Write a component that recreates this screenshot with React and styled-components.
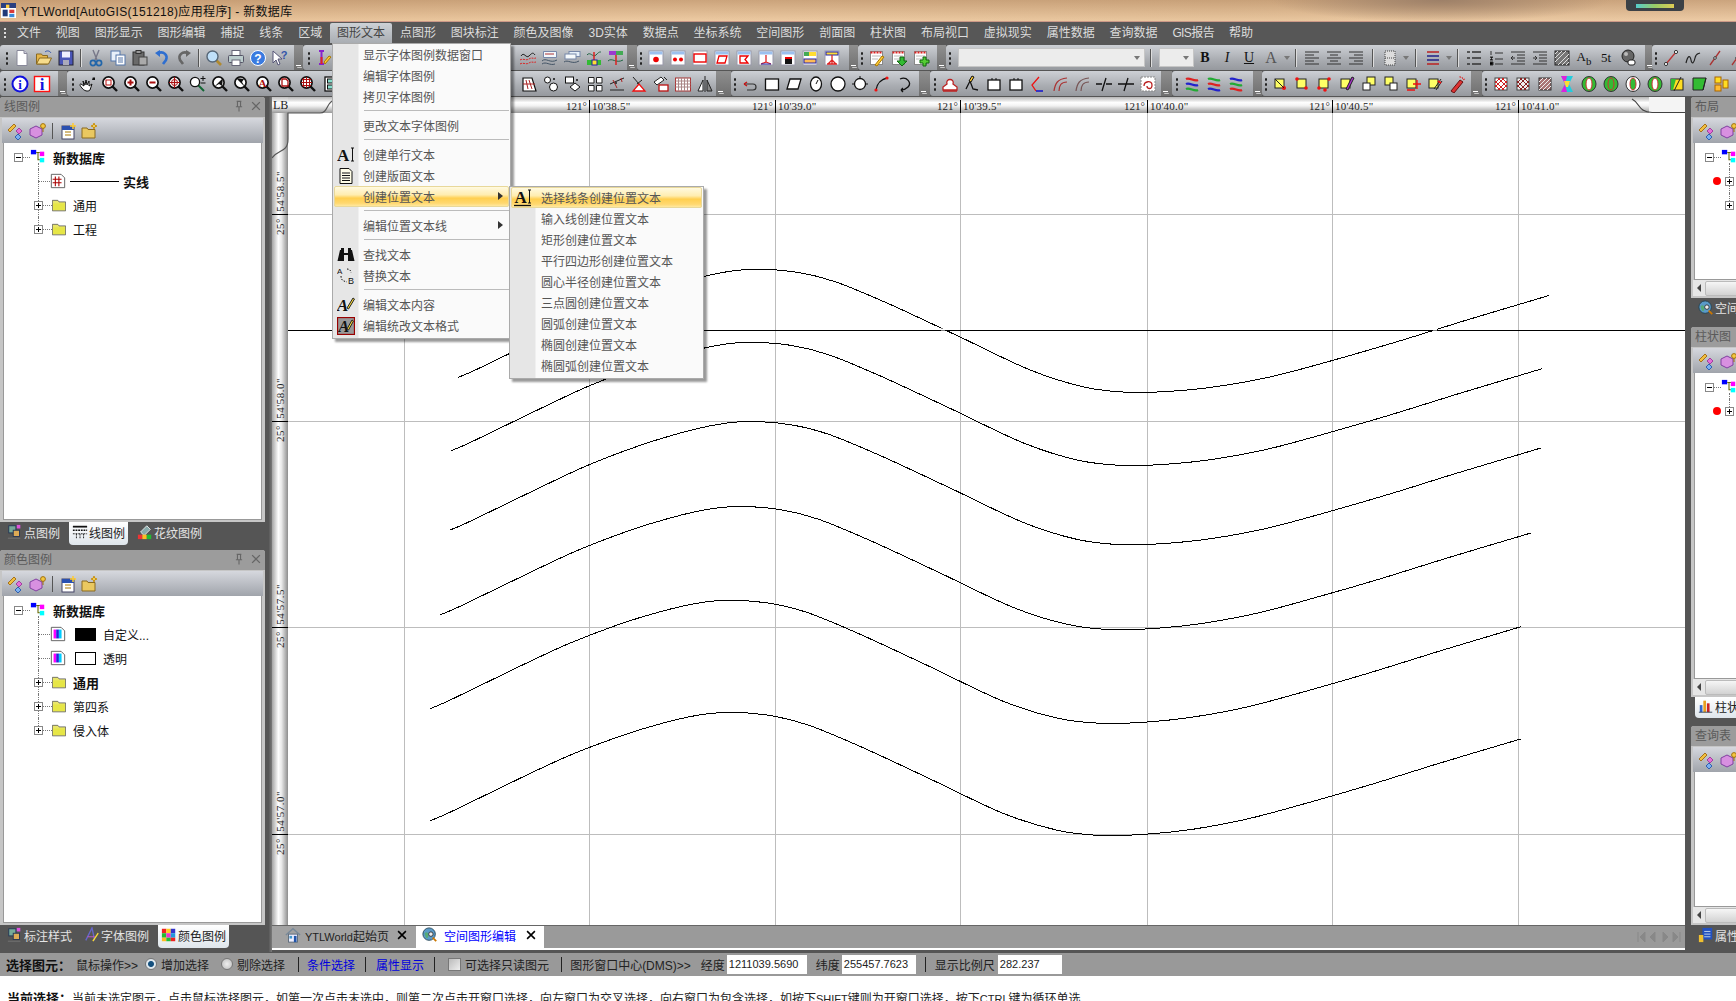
import React from 'react';
import styled, { createGlobalStyle } from 'styled-components';

const GlobalStyle = createGlobalStyle`
  html, body {
    margin: 0;
    padding: 0;
    background: #fff;
    overflow: hidden;
  }
  body {
    font-family: "Liberation Sans", "Noto Sans CJK SC", sans-serif;
    font-size: 12px;
    color: #222;
  }
`;

const Shell = styled.div`
  position: relative;
  width: 1736px;
  height: 1001px;
  overflow: hidden;
  display: flex;
  flex-direction: column;
  background: #555;
`;

/* ---------- title + menu ---------- */

const TitleBar = styled.div`
  height: 21px;
  flex: none;
  position: relative;
  display: flex;
  align-items: center;
  padding-left: 1px;
  gap: 5px;
  color: #111;
  background:
    radial-gradient(ellipse 170px 22px at 1440px 0, #9d8068 0, rgba(157, 128, 104, 0) 100%),
    linear-gradient(180deg, rgba(170, 125, 85, 0.5), rgba(240, 205, 165, 0.3)),
    linear-gradient(90deg, #e2bb90, #eccaa2 40%, #e6c49c 70%, #eccba6);
`;

const TitleText = styled.span`
  white-space: nowrap;
  font-size: 12px;
  letter-spacing: 0.35px;
`;

const Gadget = styled.div`
  position: absolute;
  left: 1626px;
  top: -3px;
  width: 58px;
  height: 14px;
  border-radius: 0 0 4px 4px;
  background: #3c4146;
  display: flex;
  align-items: center;
  justify-content: center;
  &::after {
    content: "";
    width: 38px;
    height: 4px;
    margin-top: 3px;
    background: linear-gradient(90deg, #5cc, #9c6, #dc5);
  }
`;

const MenuBar = styled.div`
  height: 24px;
  flex: none;
  display: flex;
  align-items: flex-start;
  padding-left: 3px;
  background: #575757;
  border-top: 1px solid #c98;
  box-sizing: border-box;
`;

const MenuGrip = styled.span`
  width: 7px;
  height: 12px;
  margin-top: 5px;
  background: radial-gradient(circle, #ddd 1px, transparent 1.4px) 0 0 / 4px 4px repeat-y;
`;

const MenuItem = styled.span`
  height: 20px;
  line-height: 21px;
  padding: 0 7px;
  margin-right: 0.85px;
  margin-top: 1px;
  white-space: nowrap;
  letter-spacing: ${(p) => (p.$tight ? '-0.6px' : '0')};
  color: ${(p) => (p.$active ? '#444' : '#ddd')};
  background: ${(p) => (p.$active ? 'linear-gradient(180deg, #cdd1d6, #a9adb2)' : 'none')};
  border-radius: 2px 2px 0 0;
`;

/* ---------- toolbars ---------- */

const ToolRow = styled.div`
  height: 25px;
  flex: none;
  display: flex;
  margin-bottom: 1px;
`;

const ToolGroup = styled.div`
  width: ${(p) => p.$w}px;
  flex: none;
  display: flex;
  align-items: center;
  padding-left: ${(p) => p.$pad || 0}px;
  box-sizing: border-box;
  border-radius: 3px 0 0 3px;
  overflow: hidden;
  background: linear-gradient(180deg, #cdd0d5, #a9acb1 60%, #96999e);
`;

const Grip = styled.span`
  width: 8px;
  height: 14px;
  flex: none;
  background: radial-gradient(circle, #222 1px, transparent 1.4px) 0 0 / 8px 5px repeat-y;
`;

const ToolSlot = styled.span`
  width: 22px;
  height: 22px;
  flex: none;
  display: flex;
  align-items: center;
  justify-content: center;
`;

const ToolFill = styled.span`
  flex: 1;
`;

const ToolSep = styled.span`
  width: 1px;
  height: 18px;
  flex: none;
  background: #555;
  border-right: 1px solid #ddd;
  margin: 0 ${(p) => p.$m || 3}px;
`;

const Tail = styled.span`
  width: ${(p) => p.$w || 9}px;
  height: 100%;
  flex: none;
  margin-left: auto;
  position: relative;
  background: linear-gradient(180deg, #8f8f8f, #6f6f6f);
  &::after {
    content: "";
    position: absolute;
    left: 2px;
    bottom: 4px;
    width: 5px;
    height: 1px;
    background: #fff;
    box-shadow: 1px 2px 0 -0.2px #fff;
  }
`;

const Combo = styled.span`
  width: ${(p) => p.$w}px;
  height: 19px;
  flex: none;
  box-sizing: border-box;
  background: #ececec;
  border: 1px solid #c6c6c6;
  display: flex;
  align-items: center;
  justify-content: flex-end;
  padding-right: 4px;
  margin-left: ${(p) => p.$ml || 0}px;
  &::after {
    content: "";
    border: 3px solid transparent;
    border-top: 4px solid #777;
    border-bottom: 0;
  }
`;

const Drop = styled.span`
  width: 9px;
  flex: none;
  display: flex;
  justify-content: center;
  &::after {
    content: "";
    border: 3px solid transparent;
    border-top: 4px solid #777;
    border-bottom: 0;
  }
`;

const TextTool = styled.span`
  font-family: "Liberation Serif", serif;
  font-weight: ${(p) => (p.$plain ? 400 : 700)};
  font-style: ${(p) => (p.$italic ? 'italic' : 'normal')};
  text-decoration: ${(p) => (p.$under ? 'underline' : 'none')};
  font-size: ${(p) => p.$size || 14}px;
  color: ${(p) => p.$color || '#111'};
`;

/* ---------- icons ---------- */

const Glyph = styled.svg`
  width: ${(p) => p.$s || 18}px;
  height: ${(p) => p.$s || 18}px;
  flex: none;
  display: block;
`;

const Card = ({ children }) => (
  <>
    <rect x="2" y="2" width="14" height="14" fill="#fff" stroke="#99a" />
    <rect x="2.5" y="2.5" width="13" height="3" fill="#9cc0ee" />
    {children}
  </>
);

const Note = ({ children }) => (
  <>
    <rect x="2.5" y="2.5" width="12" height="13" fill="#fff" stroke="#888" />
    <path d="M2.5 3.5h12" stroke="#d22" strokeWidth="2" strokeDasharray="2 1" />
    <path d="M4 7h9M4 10h6" stroke="#bbb" />
    {children}
  </>
);

const Lens = ({ children }) => (
  <>
    <path d="M11 11l5 5" stroke="#111" strokeWidth="2.4" />
    <circle cx="7.5" cy="7.5" r="5.6" fill="#fff" stroke="#111" strokeWidth="1.7" />
    {children}
  </>
);

const Yel = ({ children }) => (
  <>
    <rect x="3" y="4" width="9" height="9" fill="#ff6" stroke="#222" />
    {children}
  </>
);

const Hatch = ({ c = '#c22', bg = '#fff' }) => (
  <>
    <rect x="3" y="3" width="12" height="12" fill={bg} stroke="#444" />
    <path d="M3 6l9 9M3 10l5 5M6 3l9 9M10 3l5 5M15 6l-9 9M15 10l-5 5M12 3l-9 9M8 3l-5 5" stroke={c} />
  </>
);

const Ring = ({ fill = '#3b3', inner = '#fff', c = '#c33' }) => (
  <>
    <ellipse cx="9" cy="9" rx="7" ry="7.5" fill={fill} stroke="#333" />
    <ellipse cx="9" cy="9" rx="3" ry="6" fill={inner} stroke={c} />
  </>
);

const Line3 = ({ a, b, c }) => (
  <>
    <path d="M3 4c4-2 8 3 12 1" stroke={a} strokeWidth="2.4" fill="none" />
    <path d="M3 9c4-2 8 3 12 1" stroke={b} strokeWidth="2.4" fill="none" />
    <path d="M3 14c4-2 8 3 12 1" stroke={c} strokeWidth="2.4" fill="none" />
  </>
);

const ICONS = {
  file: <><path d="M4 1.5h7l3 3v12H4z" fill="#fff" stroke="#889" /><path d="M11 1.5v3h3" fill="#ccd" stroke="#889" /></>,
  open: <><path d="M1.5 15V5h5l1 1.5h5V15z" fill="#e6b64a" stroke="#8a6a20" /><path d="M1.5 15l3-6h12l-3 6z" fill="#f6dc8c" stroke="#8a6a20" /><path d="M10 3c2-2 5-1 6 1" stroke="#35a" fill="none" /></>,
  save: <><rect x="2" y="2" width="14" height="14" fill="#4a56b8" stroke="#223" /><rect x="5" y="2.5" width="8" height="6" fill="#eef" /><rect x="6" y="11" width="6" height="5" fill="#aab" /></>,
  cut: <><path d="M6 1l4 10M12 1l-4 10" stroke="#778" strokeWidth="1.4" /><circle cx="6" cy="14" r="2.6" fill="none" stroke="#26a" strokeWidth="1.7" /><circle cx="12" cy="14" r="2.6" fill="none" stroke="#26a" strokeWidth="1.7" /></>,
  copy: <><rect x="2" y="2" width="9" height="10" fill="#e8f0fa" stroke="#57a" /><rect x="7" y="6" width="9" height="10" fill="#fff" stroke="#57a" /><path d="M9 9h5M9 11h5M9 13h5" stroke="#57a" /></>,
  paste: <><rect x="2" y="3" width="11" height="13" fill="#6a6a6a" stroke="#333" /><rect x="5" y="1.5" width="5" height="3" fill="#999" stroke="#333" /><rect x="8" y="8" width="8" height="8" fill="#aaa" stroke="#444" /></>,
  undo: <><path d="M5 4c6-2 10 2 8 7l-3 4" stroke="#2f6fd0" strokeWidth="2.6" fill="none" /><path d="M2 4l5-3v7z" fill="#2f6fd0" /></>,
  redo: <><path d="M13 4c-6-2-10 2-8 7l3 4" stroke="#666" strokeWidth="2.6" fill="none" /><path d="M16 4l-5-3v7z" fill="#666" /></>,
  search: <><path d="M11 11l5 5" stroke="#b08a30" strokeWidth="2.6" /><circle cx="7.5" cy="7.5" r="5.5" fill="#bfe0fa" stroke="#567" strokeWidth="1.4" /></>,
  print: <><rect x="5" y="1.5" width="8" height="5" fill="#fff" stroke="#667" /><rect x="1.5" y="6.5" width="15" height="7" rx="1" fill="#bcc" stroke="#556" /><rect x="5" y="11" width="8" height="5.5" fill="#fff" stroke="#667" /></>,
  help: <><circle cx="9" cy="9" r="7.5" fill="#3a7be0" stroke="#fff" /><text x="9" y="13.5" fontSize="12" fontWeight="700" textAnchor="middle" fill="#fff" fontFamily="Liberation Sans">?</text></>,
  what: <><path d="M2 2v12l3-3 2 5 2-1-2-5h4z" fill="#fff" stroke="#557" /><text x="13" y="10" fontSize="11" fontWeight="700" textAnchor="middle" fill="#35a" fontFamily="Liberation Sans">?</text></>,
  pencilI: <><path d="M4 2h5M6.5 2v13M4 15h5" stroke="#82c" strokeWidth="2" /><path d="M6.5 8v7" stroke="#d22" strokeWidth="2" /><path d="M10 15l6-7-2-1-5 6z" fill="#fc3" stroke="#a70" /></>,
  waveRed: <><path d="M2 7c3-5 5 3 8 0s4-4 6-1" stroke="#222" fill="none" /><path d="M1 11c3-2 6 1 9-1s4 0 7-1M1 15c3-2 6 1 9-1s4 0 7-1" stroke="#d22" strokeDasharray="2 1" fill="none" /></>,
  waveBox: <><path d="M2.5 2.5h13v6h-13z" fill="#f4f8fc" stroke="#78a" /><path d="M4 5h9" stroke="#a33" /><path d="M1 12c4-4 8 3 15-1M1 15c4-3 8 2 13 0" stroke="#456" fill="none" /></>,
  waveBox2: <><rect x="6" y="2.5" width="11" height="5" fill="#e6f0fa" stroke="#78a" /><rect x="2" y="5" width="11" height="5" fill="#f6fafc" stroke="#78a" /><path d="M1 13c4-3 8 3 15-1" stroke="#456" fill="none" /></>,
  waveLink: <><path d="M2 6c3-4 6 3 9 0s3-3 5-3" stroke="#264" fill="none" /><path d="M9 3v9" stroke="#d22" strokeWidth="1.5" /><rect x="2" y="11" width="14" height="5" fill="#3b3" /><rect x="7" y="11" width="5" height="5" fill="#fd3" stroke="#22a" /></>,
  waveBar: <><rect x="2" y="2" width="14" height="4" fill="#9c3ad0" /><rect x="9" y="2" width="7" height="4" fill="#4a5" /><path d="M1 12c4-4 8 3 15-1" stroke="#264" fill="none" /><path d="M9 6v10" stroke="#d22" strokeWidth="1.5" /></>,
  cardDot: <Card><circle cx="9" cy="10.5" r="2.8" fill="#e00" /></Card>,
  cardDots: <Card><circle cx="6" cy="10.5" r="2" fill="#e00" /><circle cx="12" cy="10.5" r="2" fill="#e00" /></Card>,
  cardRect: <><rect x="2" y="2" width="14" height="14" fill="#fff" stroke="#99a" /><rect x="3" y="5" width="12" height="8" fill="#fff" stroke="#e00" strokeWidth="1.4" /></>,
  cardPara: <Card><path d="M6 7h8l-2 7H4z" fill="none" stroke="#e00" strokeWidth="1.3" /></Card>,
  cardChev: <Card><path d="M5 7h8l-3 3.5 3 3.5H5z" fill="none" stroke="#e00" strokeWidth="1.3" /></Card>,
  cardAxis: <Card><path d="M9 6v7l-5 2M9 13l5 2" stroke="#d22" strokeWidth="1.3" fill="none" /><path d="M4 15h10" stroke="#22a" /></Card>,
  cardBlock: <Card><rect x="6" y="10" width="7" height="5" fill="#111" /><rect x="6" y="8" width="7" height="2" fill="#e00" /></Card>,
  cardSplit: <><rect x="2" y="2" width="14" height="14" fill="#fff" stroke="#99a" /><rect x="3" y="3" width="12" height="4" fill="#4a5" /><rect x="8" y="3" width="7" height="4" fill="#fd3" /><rect x="3" y="10" width="12" height="4" fill="#fb5" stroke="#22a" /></>,
  cardCross: <><rect x="2" y="2" width="14" height="14" fill="#fff" stroke="#99a" /><rect x="3" y="3" width="12" height="3" fill="#fd3" stroke="#22a" /><path d="M9 6v9M4 15h10M5 15l4-4 4 4" stroke="#d22" strokeWidth="1.3" fill="none" /></>,
  noteEdit: <Note><path d="M7 16l7-9 2 1-7 9z" fill="#fc3" stroke="#a70" /></Note>,
  noteDown: <Note><path d="M10 8h4v4h3l-5 5-5-5h3z" fill="#3b3" stroke="#161" /></Note>,
  notePlus: <Note><path d="M11 8h3v3h3v3h-3v3h-3v-3H8v-3h3z" fill="#5c3" stroke="#161" /></Note>,
  alignL: <path d="M2 3h14M2 6h9M2 9h14M2 12h9M2 15h14" stroke="#333" />,
  alignC: <path d="M2 3h14M5 6h8M2 9h14M5 12h8M2 15h14" stroke="#333" />,
  alignR: <path d="M2 3h14M7 6h9M2 9h14M7 12h9M2 15h14" stroke="#333" />,
  table: <><rect x="4" y="2" width="10" height="14" fill="#ddd" stroke="#444" strokeDasharray="1 1" /><path d="M4 9h10" stroke="#444" strokeDasharray="1 1" /></>,
  listRed: <><path d="M3 3h12M3 15h12" stroke="#b22" strokeWidth="1.4" /><path d="M3 7h12M3 11h12" stroke="#228" strokeWidth="1.4" /></>,
  bullet: <path d="M2 3h3M7 3h9M2 9h3M7 9h9M2 15h3M7 15h9" stroke="#333" strokeWidth="1.5" />,
  number: <path d="M4 2v4M3 8h3l-3 3h3M3 13h3v3H3M8 4h8M8 10h8M8 15h8" stroke="#333" />,
  indentL: <path d="M2 3h14M8 6h8M8 9h8M8 12h8M2 15h14M6 9H2m2-2L2 9l2 2" stroke="#333" fill="none" />,
  indentR: <path d="M2 3h14M8 6h8M8 9h8M8 12h8M2 15h14M2 9h4m-2-2l2 2-2 2" stroke="#333" fill="none" />,
  texture: <><rect x="2" y="2" width="14" height="14" fill="#777" stroke="#222" /><path d="M2 5l3-3M2 9l7-7M2 13l11-11M5 16L16 5M9 16l7-7M13 16l3-3" stroke="#ddd" /></>,
  ball: <><circle cx="9" cy="7" r="6" fill="#666" stroke="#222" /><circle cx="7" cy="5" r="2" fill="#bbb" /><rect x="9" y="11" width="7" height="5" rx="2" fill="#fff" stroke="#222" /></>,
  nodeLine: <><path d="M4 15L14 3" stroke="#b33" strokeWidth="1.3" /><circle cx="14" cy="3" r="1.6" fill="#fff" stroke="#333" /><circle cx="4" cy="15" r="1.6" fill="#fff" stroke="#333" /></>,
  wavy: <path d="M2 14c2-8 4-8 5-3s3 3 4-2 3-4 5-5" stroke="#222" fill="none" strokeWidth="1.2" />,
  slash: <><path d="M4 16L14 2" stroke="#a33" strokeWidth="1.3" /><circle cx="9" cy="9" r="1.3" fill="#fff" stroke="#333" /></>,
  info: <><circle cx="9" cy="9" r="7.5" fill="#fff" stroke="#11d" strokeWidth="2" /><text x="9" y="14" fontSize="13" fontWeight="700" textAnchor="middle" fill="#11d" fontFamily="Liberation Serif">i</text></>,
  infoBox: <><rect x="1.5" y="1.5" width="15" height="15" fill="#fff" stroke="#f11" strokeWidth="1.4" /><text x="9" y="14.5" fontSize="17" fontWeight="700" textAnchor="middle" fill="#11d" fontFamily="Liberation Serif">i</text></>,
  hand: <><path d="M3 13c-2-2-3-4-1-4l3 2-1-5 2 4 1-5 1 5 2-4v5l3-2-2 6c-2 2-6 1-8-2z" fill="#fff" stroke="#111" /><path d="M14 2l1 1 1-1v3h-3z" fill="#111" /></>,
  zRect: <Lens><rect x="5" y="5" width="5" height="5" fill="none" stroke="#b11" /></Lens>,
  zPlus: <Lens><path d="M7.5 4.5v6M4.5 7.5h6" stroke="#a11" strokeWidth="2" /></Lens>,
  zMinus: <Lens><path d="M4.5 7.5h6" stroke="#a11" strokeWidth="2" /></Lens>,
  zCross: <Lens><path d="M7.5 2v11M2 7.5h11" stroke="#a11" strokeWidth="1.2" /><circle cx="7.5" cy="7.5" r="3" fill="none" stroke="#a11" /></Lens>,
  zPm: <><path d="M9 10l6 6" stroke="#163" strokeWidth="2" /><circle cx="6" cy="7" r="4.6" fill="#fff" stroke="#111" strokeWidth="1.3" /><path d="M14 1v5M11.5 3.5h5M11.5 8h5" stroke="#111" /></>,
  zArrow: <Lens><path d="M3 12l9-9-1 8-3-2z" fill="#111" /></Lens>,
  zBack: <Lens><path d="M12 12L3 3l8 1-2 3z" fill="#111" /></Lens>,
  zA: <Lens><text x="7.5" y="11.5" fontSize="11" fontWeight="700" textAnchor="middle" fill="#a11" fontFamily="Liberation Serif">A</text></Lens>,
  zDoc: <Lens><path d="M5 4h4l2 2v5H5z" fill="#fff" stroke="#a11" strokeWidth="1.3" /></Lens>,
  zGrid: <Lens><path d="M4.5 3v9M7.5 2v11M10.5 3v9M3 4.5h9M2 7.5h11M3 10.5h9" stroke="#a11" /></Lens>,
  tiles: <><rect x="4" y="2" width="10" height="14" fill="#fff" stroke="#111" strokeWidth="1.3" /><rect x="6.5" y="4" width="5" height="4" fill="#8dc" stroke="#111" /><rect x="6.5" y="10" width="5" height="4" fill="#8dc" stroke="#111" /></>,
  trap: <><path d="M3 3h9l4 13H3z" fill="#fff" stroke="#111" strokeWidth="1.2" /><path d="M6 5l2 9M9 5l3 9M3 9h12" stroke="#a22" /></>,
  circles: <><circle cx="5.5" cy="5" r="3" fill="#fff" stroke="#111" /><circle cx="11.5" cy="12" r="4" fill="#fff" stroke="#111" /><circle cx="12" cy="4" r="1" fill="#111" /></>,
  boxDiamond: <><rect x="1.5" y="2" width="8" height="6" fill="#fff" stroke="#111" /><path d="M11 8l5 4-5 4-5-4z" fill="#fff" stroke="#111" /><circle cx="13" cy="5" r="1" fill="#111" /></>,
  four: <path d="M2.5 2.5h5.5v5.5H2.5zM10.5 2.5H16v5.5h-5.5zM2.5 10.5h5.5V16H2.5zM10.5 10.5H16V16h-5.5z" fill="#fff" stroke="#222" />,
  triLines: <><path d="M2 9l14-6M2 15h14" stroke="#222" /><path d="M5 5l4 8M13 3l1 4" stroke="#a22" /><circle cx="8" cy="8" r="1" fill="#222" /></>,
  redTri: <><path d="M3 2l6 7M12 5L7 9" stroke="#222" /><path d="M9 9l6 7H3z" fill="#fff" stroke="#e11" strokeWidth="1.3" /></>,
  tilt: <><path d="M2 7l7-5 3 3-7 5z" fill="#fff" stroke="#222" /><rect x="7" y="10" width="9" height="6" fill="#fff" stroke="#b11" strokeWidth="1.3" /><path d="M12 2l3 3" stroke="#222" /></>,
  gridRed: <><rect x="1.5" y="3" width="15" height="13" fill="#fff" stroke="#a33" /><path d="M4.5 3v13M7.5 3v13M10.5 3v13M13.5 3v13M1.5 6h15M1.5 9h15M1.5 12h15" stroke="#a88" /></>,
  mirror: <><path d="M9 1v16" stroke="#222" /><path d="M7 5v11H2z" fill="#fff" stroke="#222" /><path d="M11 5v11h5z" fill="#888" stroke="#222" /></>,
  loop: <><path d="M3 9h9c4 0 4 6 0 6H6" fill="none" stroke="#333" strokeWidth="1.2" /><path d="M3 9l3-2M3 9l3 2" stroke="#c11" strokeWidth="1.4" /></>,
  rectB: <rect x="2.5" y="4" width="13" height="11" fill="#fff" stroke="#111" strokeWidth="1.3" />,
  paraB: <path d="M5 4h11l-3 10H2z" fill="#fff" stroke="#111" strokeWidth="1.3" />,
  circDot: <><ellipse cx="9" cy="9" rx="5.5" ry="7" fill="#fff" stroke="#111" strokeWidth="1.3" /><path d="M9 9l2-4" stroke="#111" /></>,
  circB: <circle cx="9" cy="9" r="7" fill="#fff" stroke="#111" strokeWidth="1.3" />,
  circRing: <><circle cx="9" cy="9" r="5.5" fill="#fff" stroke="#111" strokeWidth="1.3" /><path d="M1 9h3M14 9h3M9 1v3" stroke="#111" /></>,
  arcRed: <><path d="M3 15C4 8 9 4 14 3" fill="none" stroke="#111" strokeWidth="1.3" /><circle cx="3" cy="15" r="1.6" fill="#e11" /><circle cx="14" cy="3" r="1.6" fill="#e11" /></>,
  arcBlack: <path d="M5 4c7-3 12 4 8 8-2 2-4 3-7 3m0 0l2-2m-2 2l2 2" fill="none" stroke="#111" strokeWidth="1.3" />,
  stamp: <><path d="M6 9c-2-6 8-6 6 0l4 3v3H2v-3z" fill="#fff" stroke="#b22" strokeWidth="1.3" /><path d="M2 16h14" stroke="#b22" strokeWidth="1.6" /></>,
  penLine: <><path d="M3 14l4-8 3 8 5 1" fill="none" stroke="#111" strokeWidth="1.3" /><path d="M6 6l3-5 2 1-3 5z" fill="#fc3" stroke="#111" /></>,
  tabRect: <><rect x="3" y="5" width="12" height="10" fill="#fff" stroke="#111" strokeWidth="1.3" /><path d="M7 5V3M11 5V3" stroke="#111" /></>,
  polyRB: <><path d="M10 2L3 10l4 6" fill="none" stroke="#e11" strokeWidth="1.3" /><path d="M7 16h7" stroke="#11c" strokeWidth="1.3" /></>,
  cornerR: <path d="M3 16C4 9 6 4 16 3M8 16c0-5 2-9 8-9" fill="none" stroke="#a33" strokeWidth="1.2" />,
  cornerG: <path d="M3 16C4 9 6 4 16 3M8 16c0-5 2-9 8-9" fill="none" stroke="#755" strokeWidth="1.2" />,
  breakH: <path d="M1 9h6M11 9h6M11 3L7 16" stroke="#111" strokeWidth="1.3" />,
  crossH: <path d="M1 9h16M11 3L7 16" stroke="#111" strokeWidth="1.3" />,
  swirl: <><rect x="2" y="2" width="14" height="14" fill="#fff" stroke="#888" strokeDasharray="2 1" /><path d="M5 11c0-5 8-6 8-1s-5 4-5 1" fill="none" stroke="#b22" strokeWidth="1.3" /></>,
  stackA: <Line3 a="#d22" b="#22c" c="#2a3" />,
  stackB: <Line3 a="#2a3" b="#d22" c="#22c" />,
  stackC: <Line3 a="#22c" b="#2a3" c="#d22" />,
  y1: <Yel><circle cx="12" cy="13" r="2" fill="#e11" /><path d="M3 4l9 9" stroke="#222" /></Yel>,
  y2: <Yel><circle cx="3" cy="4" r="1.8" fill="#e11" /><circle cx="12" cy="13" r="1.8" fill="#e11" /></Yel>,
  y3: <Yel><circle cx="3" cy="13" r="1.8" fill="#e11" /><circle cx="13" cy="4" r="1.8" fill="#e11" /><circle cx="9" cy="15" r="1.8" fill="#e11" /></Yel>,
  y4: <Yel><path d="M8 14l6-12 2 1-6 12z" fill="#a3c" stroke="#222" /></Yel>,
  y5: <><rect x="7" y="2" width="8" height="8" fill="#ff6" stroke="#222" /><rect x="3" y="8" width="7" height="7" fill="#fff" stroke="#222" /></>,
  y6: <><rect x="3" y="2" width="8" height="8" fill="#ff6" stroke="#222" /><rect x="8" y="8" width="7" height="7" fill="#fff" stroke="#222" /></>,
  y7: <Yel><path d="M9 9h8M13 5v9M3 15h8" stroke="#e11" strokeWidth="1.3" /></Yel>,
  y8: <Yel><path d="M8 14l7-10M10 15l6-9" stroke="#222" /><path d="M12 6l3 2" stroke="#e11" strokeWidth="2" /></Yel>,
  brush: <><path d="M3 16l9-11 3 2-9 11z" fill="#d33" stroke="#611" /><path d="M14 2l.8 2M17 4l-2 .8M12 1l.3 2" stroke="#d33" /></>,
  hatchA: <Hatch />,
  hatchB: <Hatch c="#822" bg="#eee" />,
  hatchC: <><rect x="3" y="3" width="12" height="12" fill="#a77" stroke="#333" /><path d="M3 7l4-4M3 11l8-8M3 15L15 3M7 15l8-8M11 15l4-4" stroke="#eee" /></>,
  rainbow: <><path d="M3 1h12l-4 8 4 8H3l4-8z" fill="#2cd" /><path d="M3 1h6L7 9l2 8H3l4-8z" fill="#d2d" /><path d="M6 6h6l-2 6H8z" fill="#fd3" /></>,
  ring1: <Ring />,
  ring2: <Ring fill="#3b3" inner="#3b3" />,
  ring3: <Ring fill="#fff" inner="#3b3" />,
  ring4: <Ring fill="#3b3" inner="#fff" c="#c33" />,
  halfA: <><rect x="3" y="4" width="12" height="11" fill="#fd2" stroke="#222" /><path d="M3 15V4h5l-3 11z" fill="#3b3" /><path d="M13 2L6 16" stroke="#222" /></>,
  halfB: <><path d="M3 3h13l-3 12H3z" fill="#3b3" stroke="#222" /><path d="M16 3l-3 12" stroke="#222" /></>,
  bars: <><rect x="3" y="2" width="6" height="6" fill="#fd2" stroke="#a60" /><rect x="3" y="10" width="6" height="6" fill="#fb3" stroke="#a60" /><rect x="11" y="5" width="5" height="8" fill="#fd2" stroke="#a60" /></>,
  gemKey: <><path d="M1 8l6-6 2 2-6 6z" fill="#f0c040" stroke="#a87018" /><path d="M12 6l3 3-3 3-3-3z" fill="#e66fd8" stroke="#a040a0" /><path d="M11 12l3 3-3 3-3-3z" fill="#7cb0f0" stroke="#3060b0" /></>,
  gemPink: <><path d="M8 4l6 3v6l-6 3-6-3V7z" fill="#d890e0" stroke="#8040a0" /><circle cx="15" cy="4" r="2.4" fill="#f4c840" stroke="#a07010" /><path d="M15 6v4" stroke="#a07010" /></>,
  newTable: <><rect x="3" y="4" width="12" height="13" fill="#fff" stroke="#446" /><rect x="3" y="4" width="12" height="4" fill="#2a50b0" /><path d="M6 10h6M6 13h6" stroke="#a70" /><path d="M14 1v6M11 4h6" stroke="#fc3" strokeWidth="1.5" /></>,
  newFolder: <><path d="M2 16V6h5l1 1.5h7V16z" fill="#eac860" stroke="#8a6a20" /><path d="M14 1l.8 2.2L17 4l-2.2.8L14 7l-.8-2.2L11 4l2.2-.8z" fill="#ffe060" stroke="#c89010" /></>,
  dbTree: <><rect x="1" y="1" width="6" height="5" fill="#00f" /><rect x="11" y="3" width="5" height="5" fill="#f0f" /><rect x="11" y="10" width="5" height="5" fill="#0ff" /><path d="M7 4h4M9 4v8h2" stroke="#660" strokeWidth="1.2" fill="none" /></>,
  legendLine: <><path d="M1.5 1.5h11l4 4v11h-15z" fill="#fff" stroke="#555" /><path d="M3 7h10M3 11h10M6 4v11M10 4v11" stroke="#a00" strokeWidth="1.2" /></>,
  legendColor: <><path d="M1.5 1.5h11l4 4v11h-15z" fill="#fff" stroke="#555" /><rect x="4" y="4" width="3" height="10" fill="#f0f" /><rect x="7" y="4" width="3" height="10" fill="#22d" /><rect x="10" y="4" width="3" height="10" fill="#0cf" /></>,
  folder: <><path d="M0.5 16.500V3h7l1.500 2h8.500v11.500z" fill="#e9e66a" stroke="#555" /><path d="M1.500 15.500V7h15v8.500z" fill="#e6e646" /></>,
  tabDots: <><rect x="2" y="2" width="8" height="8" fill="#7a9" stroke="#235" /><rect x="7" y="7" width="7" height="7" fill="#da5" stroke="#235" /><rect x="11" y="1" width="4" height="4" fill="#d5d" /><path d="M1 16h14" stroke="#777" /></>,
  tabLines: <><path d="M1 3h16" stroke="#111" strokeWidth="2" /><path d="M1 7h16" stroke="#111" strokeDasharray="2 1" strokeWidth="1.5" /><path d="M1 11h16M5 11v5M9 11v5M13 11v5" stroke="#111" strokeDasharray="2 1" /></>,
  tabHatch: <><path d="M4 9l7-7 4 4-7 7z" fill="#8aa" stroke="#eee" /><rect x="1" y="12" width="5" height="5" fill="#e33" /><rect x="6" y="12" width="5" height="5" fill="#fb2" /><rect x="11" y="12" width="5" height="5" fill="#2b3" /></>,
  tabFont: <><path d="M2 15L9 1l3 14" fill="none" stroke="#66c" strokeWidth="1.5" /><path d="M4 11h8" stroke="#c5c" /><path d="M10 16l6-9" stroke="#fd3" strokeWidth="1.5" /></>,
  tabColor: <><rect x="1" y="2" width="5" height="5" fill="#e22" /><rect x="6" y="2" width="5" height="5" fill="#fc2" /><rect x="11" y="2" width="5" height="5" fill="#33c" /><rect x="1" y="7" width="5" height="5" fill="#2b3" /><rect x="6" y="7" width="5" height="5" fill="#e3c" /><rect x="11" y="7" width="5" height="5" fill="#29d" /><rect x="1" y="12" width="5" height="4" fill="#fb2" /><rect x="6" y="12" width="5" height="4" fill="#2b3" /><rect x="11" y="12" width="5" height="4" fill="#e22" /></>,
  tabSpace: <><circle cx="8" cy="8" r="7" fill="#5a9ac8" stroke="#245" /><path d="M3 7c3-3 5 1 4 4s-3 2-4-4z" fill="#5a7" /><circle cx="10" cy="8" r="2.5" fill="#eee" stroke="#333" /><path d="M12 12l4 4" stroke="#c70" strokeWidth="2" /></>,
  tabBars: <><rect x="2" y="8" width="3" height="8" fill="#36c" /><rect x="6" y="3" width="3" height="13" fill="#e8a020" /><rect x="10" y="6" width="3" height="10" fill="#c22" /><path d="M1 16h15" stroke="#345" /></>,
  tabAttr: <><rect x="5" y="1" width="11" height="13" fill="#2250c0" /><path d="M7 5h7M7 8h7M7 11h7" stroke="#cde" /><rect x="1" y="9" width="5" height="8" fill="#f0c030" /></>,
  home: <><path d="M1 9l8-7 8 7" stroke="#789" strokeWidth="1.6" fill="none" /><rect x="4" y="8" width="10" height="9" fill="#eef" stroke="#567" /><rect x="10" y="10" width="3" height="7" fill="#25a" /><rect x="5" y="10" width="3" height="3" fill="#49c" /></>,
  appIcon: <><rect x="0" y="0" width="18" height="18" fill="#fff" /><rect x="0" y="0" width="18" height="6" fill="#2a3f80" /><rect x="2" y="8" width="6" height="8" fill="#223a78" /><rect x="10" y="8" width="6" height="4" fill="#d83a3a" /><rect x="10" y="13" width="6" height="4" fill="#3a8ad8" /><rect x="6" y="2" width="4" height="4" fill="#ffd040" /></>,
  singleText: <><text x="0" y="14.5" fontSize="17" fontWeight="700" fill="#111" fontFamily="Liberation Serif">A</text><path d="M14 2h3M15.5 2v13M14 15h3" stroke="#111" /></>,
  pageText: <><path d="M3 1.5h9l3 3v12H3z" fill="#fffde8" stroke="#111" /><path d="M5 6h8M5 8.5h8M5 11h8M5 13.5h8" stroke="#111" /></>,
  posText: <><text x="0.5" y="14" fontSize="17" fontWeight="700" fill="#111" fontFamily="Liberation Serif">A</text><path d="M14 1h3M15.5 1v13M14 14h3" stroke="#111" /><path d="M0 16.5h17" stroke="#111" strokeWidth="1.3" /></>,
  binoc: <><path d="M3 4h4v3h4V4h4l2.500 11h-6.500V9H7v6H0.500z" fill="#111" /><path d="M4 2h3v2H4zM11 2h3v2h-3z" fill="#111" /></>,
  replace: <><text x="0" y="7" fontSize="8" fill="#111" fontFamily="Liberation Sans">A</text><text x="11" y="17" fontSize="9" fill="#111" fontFamily="Liberation Sans">B</text><path d="M4 9c0 5 3 5 6 6M10 2c2 0 4 1 4 4" fill="none" stroke="#111" strokeDasharray="1.5 1.5" /></>,
  editText: <><text x="0" y="15" fontSize="17" fontWeight="700" fontStyle="italic" fill="#111" fontFamily="Liberation Serif">A</text><path d="M10 12l6-10 1.5 1-6 10z" fill="#fd3" stroke="#222" /></>,
  formatText: <><rect x="0.5" y="0.5" width="17" height="17" fill="#999" stroke="#900" strokeWidth="1.3" /><text x="1.5" y="15" fontSize="16" fontWeight="700" fontStyle="italic" fill="#111" fontFamily="Liberation Serif">A</text><path d="M10 12l5-9 1.5 1-5 9z" fill="#fd3" stroke="#222" /></>,
  pin: <path d="M6 3h6M7 3v7M11 3v7M5 10h8M9 10v6" stroke="#666" strokeWidth="1.4" fill="none" />,
  close: <path d="M4 4l10 10M14 4L4 14" stroke="#666" strokeWidth="1.6" />,
  closeDark: <path d="M4 4l10 10M14 4L4 14" stroke="#000" strokeWidth="2" />,
};

const Ico = ({ name, size }) => (
  <Glyph viewBox="0 0 18 18" $s={size}>
    {ICONS[name]}
  </Glyph>
);

const Tools = ({ names }) =>
  names.map((n, i) => (
    <ToolSlot key={i}>
      <Ico name={n} />
    </ToolSlot>
  ));

/* ---------- docks ---------- */

const Main = styled.div`
  flex: 1;
  min-height: 0;
  display: flex;
`;

const Dock = styled.div`
  width: ${(p) => p.$w}px;
  flex: none;
  overflow: hidden;
  display: flex;
  flex-direction: column;
`;

const Panel = styled.section`
  width: 265px;
  height: ${(p) => p.$h}px;
  flex: none;
  box-sizing: border-box;
  display: flex;
  flex-direction: column;
  background: #c6c6c6;
  border-radius: 3px 3px 0 0;
  padding: 0 2px 2px;
  margin-top: ${(p) => p.$mt || 0}px;
`;

const PanelHead = styled.header`
  height: 20px;
  flex: none;
  box-sizing: border-box;
  margin: 0 -2px;
  padding: 0 2px 3px 4px;
  background: #9c9c9c;
  color: #5a5a5a;
  display: flex;
  align-items: center;
  justify-content: space-between;
  border-radius: 3px 3px 0 0;
`;

const HeadButtons = styled.span`
  display: flex;
  gap: 3px;
`;

const PanelTools = styled.div`
  height: 25px;
  flex: none;
  margin-top: 1px;
  display: flex;
  align-items: center;
  padding-left: 5px;
  gap: 3px;
  background: linear-gradient(180deg, #d6d8de, #a0a4ab);
`;

const PanelSep = styled.span`
  width: 1px;
  height: 16px;
  background: #555;
  margin: 0 3px;
`;

const Tree = styled.div`
  flex: 1;
  min-height: 0;
  background: #fff;
  padding-top: 2px;
  overflow: hidden;
  border: 1px solid #999;
  border-top: 0;
  margin-left: 1px;
  margin-right: 1px;
`;

const Row = styled.div`
  position: relative;
  height: 24px;
  display: flex;
  align-items: center;
  padding-left: ${(p) => p.$indent - 3}px;
  white-space: nowrap;
  &::before {
    content: ${(p) => (p.$guide ? '""' : 'none')};
    position: absolute;
    left: 33.5px;
    top: ${(p) => (p.$guide === 'start' ? '18px' : '0')};
    bottom: ${(p) => (p.$guide === 'end' ? '12px' : '0')};
    border-left: 1px dotted #777;
  }
`;

const Expander = styled.span`
  position: relative;
  width: 9px;
  height: 9px;
  flex: none;
  box-sizing: border-box;
  border: 1px solid #888;
  background: #fff;
  z-index: 1;
  &::before {
    content: "";
    position: absolute;
    left: 1px;
    top: 3px;
    width: 5px;
    height: 1px;
    background: #000;
  }
  &::after {
    content: ${(p) => (p.$open ? 'none' : '""')};
    position: absolute;
    left: 3px;
    top: 1px;
    width: 1px;
    height: 5px;
    background: #000;
  }
`;

const Dots = styled.span`
  width: ${(p) => p.$w}px;
  flex: none;
  border-top: 1px dotted #777;
`;

const Label = styled.span`
  margin-left: ${(p) => p.$ml || 0}px;
  font-size: ${(p) => (p.$bold ? 13 : 12)}px;
  font-weight: ${(p) => (p.$bold ? 700 : 400)};
  color: #111;
`;

const SolidLine = styled.span`
  width: 49px;
  height: 1px;
  background: #000;
  margin-left: 4px;
  flex: none;
`;

const Swatch = styled.span`
  width: 21px;
  height: 13px;
  margin-left: 9px;
  flex: none;
  box-sizing: border-box;
  border: 1px solid #000;
  background: ${(p) => p.$fill};
`;

const RedDot = styled.span`
  position: absolute;
  left: 18px;
  top: 8px;
  width: 8px;
  height: 8px;
  border-radius: 50%;
  background: #f00;
`;

const Scroll = styled.div`
  height: 16px;
  flex: none;
  display: flex;
  align-items: center;
  background: #e6e6e6;
  padding-left: 4px;
  gap: 4px;
  &::before {
    content: "";
    border: 4px solid transparent;
    border-right: 4px solid #444;
    border-left: 0;
  }
  &::after {
    content: "";
    flex: 1;
    height: 13px;
    border: 1px solid #bbb;
    border-radius: 2px;
    background: linear-gradient(180deg, #f6f6f6, #d2d2d2);
  }
`;

const TabRow = styled.div`
  height: ${(p) => p.$h || 23}px;
  flex: none;
  display: flex;
  align-items: stretch;
  gap: 6px;
  padding-left: 4px;
  background: #555;
`;

const DockTab = styled.span`
  display: flex;
  align-items: center;
  gap: 1px;
  padding: 0 3px 3px;
  white-space: nowrap;
  color: ${(p) => (p.$active ? '#222' : '#e4e4e4')};
  background: ${(p) => (p.$active ? 'linear-gradient(180deg, #fff, #dfe6ec)' : 'none')};
  border-radius: 0 0 4px 4px;
  & > svg {
    width: 16px;
    height: 16px;
  }
`;

const Splitter = styled.div`
  width: 7px;
  flex: none;
  background: linear-gradient(90deg, #555 0, #555 50%, #7b7b7b);
`;

/* ---------- drawing area ---------- */

const Center = styled.div`
  width: 1413px;
  flex: none;
  display: flex;
  flex-direction: column;
  margin-right: 6px;
  padding-bottom: 2px;
`;

const Canvas = styled.div`
  flex: 1;
  min-height: 0;
  position: relative;
  display: grid;
  grid-template-columns: 16px 1fr;
  grid-template-rows: 16px 1fr;
  background: #fff;
`;

const RulerCorner = styled.div`
  background: linear-gradient(180deg, #c0c0c0, #fff 35%, #eee 60%, #9a9a9a);
  font-family: "Liberation Serif", serif;
  font-size: 12px;
  line-height: 17px;
  padding-left: 1px;
  color: #222;
`;

const TopRuler = styled.div`
  position: relative;
  background: linear-gradient(180deg, #b6b6b6, #fff 35%, #f2f2f2 55%, #9a9a9a);
  box-shadow: inset -36px 0 0 #f4f4f4;
`;

const LeftRuler = styled.div`
  position: relative;
  background: linear-gradient(90deg, #a4a4a4, #fff 40%, #e8e8e8 60%, #8d8d8d);
`;

const TopTick = styled.span`
  position: absolute;
  left: ${(p) => p.$x}px;
  top: 3px;
  bottom: 0;
  border-left: 1px solid #000;
  font-family: "Liberation Serif", serif;
  font-size: 11px;
  line-height: 13px;
  color: #222;
  white-space: nowrap;
`;

const TickLeftText = styled.span`
  position: absolute;
  right: 3px;
  top: 0;
`;

const TickRightText = styled.span`
  position: absolute;
  left: 2px;
  top: 0;
  letter-spacing: 0.2px;
`;

const SideTick = styled.span`
  position: absolute;
  top: ${(p) => p.$y}px;
  left: 0;
  right: 0;
  height: 0;
  border-top: 1px solid #000;
  font-family: "Liberation Serif", serif;
  font-size: 11px;
  color: #222;
`;

const SideText = styled.span`
  position: absolute;
  left: 2px;
  writing-mode: vertical-rl;
  transform: rotate(180deg);
  white-space: nowrap;
  letter-spacing: 0.5px;
  line-height: 12px;
  ${(p) => (p.$above ? 'bottom: 3px;' : 'top: 3px;')}
`;

const Plot = styled.svg`
  width: 1397px;
  height: 812px;
  display: block;
`;

const Trim = styled.svg`
  position: absolute;
  left: 0;
  top: 0;
  width: 1413px;
  height: 70px;
  pointer-events: none;
`;

const DocTabs = styled.div`
  height: 25px;
  flex: none;
  display: flex;
  align-items: stretch;
  background: #9a9a9a;
  border-top: 1px solid #666;
  box-sizing: border-box;
  border-bottom: 2px solid #fff;
`;

const DocTab = styled.span`
  width: ${(p) => p.$w}px;
  flex: none;
  box-sizing: border-box;
  display: flex;
  align-items: center;
  padding: 0 0 4px ${(p) => p.$pad}px;
  background: ${(p) => (p.$active ? '#fff' : '#a2a2a2')};
  color: ${(p) => (p.$active ? '#00f' : '#222')};
  white-space: nowrap;
`;

const DocText = styled.span`
  margin-left: ${(p) => p.$ml}px;
`;

const LatinSmall = styled.span`
  font-size: 11px;
`;

const DocClose = styled.span`
  margin-left: ${(p) => p.$ml}px;
  display: flex;
`;

const DocNav = styled.svg`
  width: 44px;
  height: 10px;
  margin: auto 4px auto auto;
`;

/* ---------- status ---------- */

const StatusBar = styled.div`
  height: 23px;
  flex: none;
  box-sizing: border-box;
  display: flex;
  align-items: center;
  padding: 0 0 1px 6px;
  background: #999;
  color: #222;
  white-space: nowrap;
  margin-top: 1px;
`;

const StatusBold = styled.strong`
  font-size: 13px;
  color: #111;
`;

const StatusText = styled.span`
  margin-left: ${(p) => p.$ml || 0}px;
`;

const StatusLink = styled.span`
  margin-left: ${(p) => p.$ml || 0}px;
  color: #00d;
`;

const StatusSep = styled.span`
  width: 1px;
  height: 15px;
  flex: none;
  background: #222;
  margin-left: ${(p) => p.$ml}px;
`;

const Radio = styled.span`
  width: 12px;
  height: 12px;
  flex: none;
  border-radius: 50%;
  box-sizing: border-box;
  margin-left: ${(p) => p.$ml}px;
  border: 1px solid #777;
  background: ${(p) =>
    p.$on
      ? 'radial-gradient(circle, #14507e 0 2.5px, #dfe8ee 3.5px)'
      : 'radial-gradient(circle, #eee, #bbb)'};
`;

const CheckBox = styled.span`
  width: 13px;
  height: 13px;
  flex: none;
  box-sizing: border-box;
  margin-left: ${(p) => p.$ml}px;
  border: 1px solid #777;
  background: linear-gradient(135deg, #bbb, #eee);
`;

const Field = styled.span`
  width: ${(p) => p.$w}px;
  height: 19px;
  flex: none;
  box-sizing: border-box;
  margin-left: ${(p) => p.$ml}px;
  padding-left: 2px;
  line-height: 19px;
  background: #fff;
  color: #222;
  font-size: 11px;
`;

const Hint = styled.div`
  height: 25px;
  flex: none;
  box-sizing: border-box;
  padding: 14px 0 0 7px;
  background: #fff;
  color: #222;
  white-space: nowrap;
  line-height: 17px;
  overflow: hidden;
`;

const HintBold = styled.strong`
  font-size: 13px;
  color: #111;
`;

const HintLatin = styled.span`
  font-size: 11px;
`;

/* ---------- menus ---------- */

const Dropdown = styled.div`
  position: absolute;
  left: ${(p) => p.$x}px;
  top: ${(p) => p.$y}px;
  width: ${(p) => p.$w}px;
  box-sizing: border-box;
  padding: 0 1px 2px;
  border: 1px solid #aaa;
  box-shadow: 3px 3px 2px rgba(0, 0, 0, 0.4);
  background: linear-gradient(90deg, #e6e6e6 0, #e6e6e6 25px, #fafafa 26px);
  z-index: 5;
`;

const DropItem = styled.div`
  position: relative;
  height: 21px;
  display: flex;
  align-items: center;
  color: #555;
  white-space: nowrap;
  box-sizing: border-box;
  ${(p) =>
    p.$active &&
    `
    background: linear-gradient(180deg, #fffbe6, #ffedb0 42%, #ffcf50 58%, #ffd870 82%, #ffeeb0);
    outline: 1px solid #e8d89a;
    outline-offset: -1px;
    border-radius: 2px;
  `}
`;

const DropIcon = styled.span`
  width: 24px;
  flex: none;
  display: flex;
  justify-content: center;
`;

const DropText = styled.span`
  margin-left: ${(p) => p.$ml}px;
`;

const DropArrow = styled.span`
  position: absolute;
  right: 6px;
  top: 6px;
  border: 4.5px solid transparent;
  border-left: 5px solid #333;
  border-right: 0;
`;

const DropSep = styled.div`
  height: 1px;
  margin: 3px 0 4px 30px;
  background: #bbb;
`;

/* ---------- curves ---------- */

const SHAPE = [
  [198, 705], [222, 680], [300, 590], [350, 535], [405, 485], [450, 452], [490, 430], [525, 422],
  [570, 430], [612, 455], [670, 512], [745, 595], [825, 685], [885, 730], [935, 744], [985, 740],
  [1035, 727], [1095, 700], [1165, 655], [1230, 610], [1300, 558], [1394, 491],
];
const OFFSETS = [[8, -398], [1, -207], [0, 0], [-11, 222], [-22, 467], [-22, 760]];

const smoothPath = (pts) => {
  let d = `M${pts[0][0]} ${pts[0][1]}`;
  for (let i = 0; i < pts.length - 1; i++) {
    const p0 = pts[i - 1] || pts[i];
    const p1 = pts[i];
    const p2 = pts[i + 1];
    const p3 = pts[i + 2] || p2;
    const c1 = [p1[0] + (p2[0] - p0[0]) / 6, p1[1] + (p2[1] - p0[1]) / 6];
    const c2 = [p2[0] - (p3[0] - p1[0]) / 6, p2[1] - (p3[1] - p1[1]) / 6];
    d += `C${c1[0].toFixed(1)} ${c1[1].toFixed(1)} ${c2[0].toFixed(1)} ${c2[1].toFixed(1)} ${p2[0].toFixed(1)} ${p2[1].toFixed(1)}`;
  }
  return d;
};

// zoom coords of the reference crop -> plot coords
const CURVES = OFFSETS.map(([dx, dy]) =>
  smoothPath(SHAPE.map(([x, y]) => [270 + 0.912 * (x + dx) - 288, 260 + 0.3827 * (y + dy) - 113]))
);

const GRID_X = [116, 301, 487, 672, 859, 1044, 1230];
const GRID_Y = [101, 308, 514, 721];
const TOP_TICKS = [
  [301, `10'38.5"`], [487, `10'39.0"`], [672, `10'39.5"`],
  [859, `10'40.0"`], [1044, `10'40.5"`], [1230, `10'41.0"`],
];
const SIDE_TICKS = [
  [101, `54'58.5"`], [308, `54'58.0"`], [514, `54'57.5"`], [721, `54'57.0"`],
];

const MENUS = ['文件', '视图', '图形显示', '图形编辑', '捕捉', '线条', '区域', '图形文本', '点图形', '图块标注', '颜色及图像', '3D实体', '数据点', '坐标系统', '空间图形', '剖面图', '柱状图', '布局视口', '虚拟现实', '属性数据', '查询数据', 'GIS报告', '帮助'];

const SUBMENU = ['输入线创建位置文本', '矩形创建位置文本', '平行四边形创建位置文本', '圆心半径创建位置文本', '三点圆创建位置文本', '圆弧创建位置文本', '椭圆创建位置文本', '椭圆弧创建位置文本'];

const PanelHeader = ({ title }) => (
  <PanelHead>
    {title}
    <HeadButtons>
      <Ico name="pin" size={14} />
      <Ico name="close" size={14} />
    </HeadButtons>
  </PanelHead>
);

const LegendTools = ({ short }) => (
  <PanelTools>
    <Ico name="gemKey" />
    <Ico name="gemPink" />
    {!short && (
      <>
        <PanelSep />
        <Ico name="newTable" />
        <Ico name="newFolder" />
      </>
    )}
  </PanelTools>
);

const RootRow = () => (
  <Row $indent={13} $guide="start">
    <Expander $open />
    <Dots $w={7} />
    <Ico name="dbTree" size={16} />
    <Label $ml={7} $bold>新数据库</Label>
  </Row>
);

const FolderRow = ({ text, bold, guide }) => (
  <Row $indent={33} $guide={guide}>
    <Expander />
    <Dots $w={9} />
    <Ico name="folder" size={14} />
    <Label $ml={7} $bold={bold}>{text}</Label>
  </Row>
);

const ItemDrop = ({ icon, text, arrow, active }) => (
  <DropItem $active={active}>
    <DropIcon>{icon && <Ico name={icon} />}</DropIcon>
    <DropText $ml={5}>{text}</DropText>
    {arrow && <DropArrow />}
  </DropItem>
);

export default function App() {
  return (
    <Shell>
      <GlobalStyle />
      <TitleBar>
        <Ico name="appIcon" size={15} />
        <TitleText>YTLWorld[AutoGIS(151218)应用程序] - 新数据库</TitleText>
        <Gadget />
      </TitleBar>

      <MenuBar>
        <MenuGrip />
        {MENUS.map((m) => (
          <MenuItem key={m} $active={m === '图形文本'} $tight={m === 'GIS报告'}>{m}</MenuItem>
        ))}
      </MenuBar>

      <ToolRow>
        <ToolGroup $w={303} $pad={3}>
          <Grip />
          <Tools names={['file', 'open', 'save']} />
          <ToolSep />
          <Tools names={['cut', 'copy', 'paste', 'undo', 'redo']} />
          <ToolSep />
          <Tools names={['search', 'print', 'help', 'what']} />
          <Tail />
        </ToolGroup>
        <ToolGroup $w={334} $pad={2}>
          <Grip />
          <Tools names={['pencilI']} />
          <ToolFill />
          <Tools names={['waveRed', 'waveBox', 'waveBox2', 'waveLink', 'waveBar']} />
          <Tail $w={10} />
        </ToolGroup>
        <ToolGroup $w={221}>
          <Grip />
          <Tools names={['cardDot', 'cardDots', 'cardRect', 'cardPara', 'cardChev', 'cardAxis', 'cardBlock', 'cardSplit', 'cardCross']} />
          <Tail />
        </ToolGroup>
        <ToolGroup $w={88}>
          <Grip />
          <Tools names={['noteEdit', 'noteDown', 'notePlus']} />
          <Tail />
        </ToolGroup>
        <ToolGroup $w={706}>
          <Grip />
          <Combo $w={187} $ml={4} />
          <ToolSep $m={5} />
          <Combo $w={35} $ml={2} />
          <ToolSlot><TextTool>B</TextTool></ToolSlot>
          <ToolSlot><TextTool $italic $plain>I</TextTool></ToolSlot>
          <ToolSlot><TextTool $under $plain>U</TextTool></ToolSlot>
          <ToolSlot><TextTool $size={16} $color="#555" $plain>A</TextTool></ToolSlot>
          <Drop />
          <ToolSep $m={4} />
          <Tools names={['alignL', 'alignC', 'alignR']} />
          <ToolSep $m={5} />
          <Tools names={['table']} />
          <Drop />
          <ToolSep $m={5} />
          <Tools names={['listRed']} />
          <Drop />
          <ToolSep $m={4} />
          <Tools names={['bullet', 'number', 'indentL', 'indentR', 'texture']} />
          <ToolSlot><TextTool $size={13} $plain>A<sub>b</sub></TextTool></ToolSlot>
          <ToolSlot><TextTool $size={13} $plain>5t</TextTool></ToolSlot>
          <Tools names={['ball']} />
          <Tail $w={7} />
        </ToolGroup>
        <ToolGroup $w={84}>
          <Grip />
          <Tools names={['nodeLine', 'wavy', 'slash', 'slash']} />
        </ToolGroup>
      </ToolRow>

      <ToolRow>
        <ToolGroup $w={67} $pad={1}>
          <Grip />
          <Tools names={['info', 'infoBox']} />
          <Tail />
        </ToolGroup>
        <ToolGroup $w={664} $pad={2}>
          <Grip />
          <Tools names={['hand', 'zRect', 'zPlus', 'zMinus', 'zCross', 'zPm', 'zArrow', 'zBack', 'zA', 'zDoc', 'zGrid', 'tiles']} />
          <ToolFill />
          <Tools names={['trap', 'circles', 'boxDiamond', 'four', 'triLines', 'redTri', 'tilt', 'gridRed', 'mirror']} />
          <Tail $w={15} />
        </ToolGroup>
        <ToolGroup $w={199}>
          <Grip />
          <Tools names={['loop', 'rectB', 'paraB', 'circDot', 'circB', 'circRing', 'arcRed', 'arcBlack']} />
          <Tail $w={11} />
        </ToolGroup>
        <ToolGroup $w={242} $pad={1}>
          <Grip />
          <Tools names={['stamp', 'penLine', 'tabRect', 'tabRect', 'polyRB', 'cornerR', 'cornerG', 'breakH', 'crossH', 'swirl']} />
          <Tail $w={11} />
        </ToolGroup>
        <ToolGroup $w={90} $pad={1}>
          <Grip />
          <Tools names={['stackA', 'stackB', 'stackC']} />
          <Tail />
        </ToolGroup>
        <ToolGroup $w={220}>
          <Grip />
          <Tools names={['y1', 'y2', 'y3', 'y4', 'y5', 'y6', 'y7', 'y8', 'brush']} />
          <Tail $w={11} />
        </ToolGroup>
        <ToolGroup $w={254}>
          <Grip />
          <Tools names={['hatchA', 'hatchB', 'hatchC', 'rainbow', 'ring1', 'ring2', 'ring3', 'ring4', 'halfA', 'halfB', 'bars']} />
        </ToolGroup>
      </ToolRow>

      <Main>
        <Dock $w={265}>
          <Panel $h={425}>
            <PanelHeader title="线图例" />
            <LegendTools />
            <Tree>
              <RootRow />
              <Row $indent={37} $guide="full">
                <Dots $w={12} />
                <Ico name="legendLine" size={16} />
                <SolidLine />
                <Label $ml={4} $bold>实线</Label>
              </Row>
              <FolderRow text="通用" guide="full" />
              <FolderRow text="工程" guide="end" />
            </Tree>
          </Panel>
          <TabRow>
            <DockTab><Ico name="tabDots" />点图例</DockTab>
            <DockTab $active><Ico name="tabLines" />线图例</DockTab>
            <DockTab><Ico name="tabHatch" />花纹图例</DockTab>
          </TabRow>
          <Panel $h={375} $mt={5}>
            <PanelHeader title="颜色图例" />
            <LegendTools />
            <Tree>
              <RootRow />
              <Row $indent={37} $guide="full">
                <Dots $w={12} />
                <Ico name="legendColor" size={16} />
                <Swatch $fill="#000" />
                <Label $ml={7}>自定义...</Label>
              </Row>
              <Row $indent={37} $guide="full">
                <Dots $w={12} />
                <Ico name="legendColor" size={16} />
                <Swatch $fill="#fff" />
                <Label $ml={7}>透明</Label>
              </Row>
              <FolderRow text="通用" bold guide="full" />
              <FolderRow text="第四系" guide="full" />
              <FolderRow text="侵入体" guide="end" />
            </Tree>
          </Panel>
          <TabRow>
            <DockTab><Ico name="tabDots" />标注样式</DockTab>
            <DockTab><Ico name="tabFont" />字体图例</DockTab>
            <DockTab $active><Ico name="tabColor" />颜色图例</DockTab>
          </TabRow>
        </Dock>

        <Splitter />

        <Center>
          <Canvas>
            <RulerCorner>LB</RulerCorner>
            <TopRuler>
              {TOP_TICKS.map(([x, t]) => (
                <TopTick key={x} $x={x}>
                  <TickLeftText>121°</TickLeftText>
                  <TickRightText>{t}</TickRightText>
                </TopTick>
              ))}
            </TopRuler>
            <LeftRuler>
              {SIDE_TICKS.map(([y, t]) => (
                <SideTick key={y} $y={y}>
                  <SideText $above>{t}</SideText>
                  <SideText>25°</SideText>
                </SideTick>
              ))}
            </LeftRuler>
            <Plot viewBox="0 0 1397 812">
              {GRID_X.map((x) => (
                <path key={x} d={`M${x + 0.5} 0V812`} stroke="#bdbdbd" />
              ))}
              {GRID_Y.map((y) => (
                <path key={y} d={`M0 ${y + 0.5}H1397`} stroke="#bdbdbd" />
              ))}
              <path d="M0 217.5H1397" stroke="#000" strokeWidth="1.2" />
              {CURVES.map((d, i) => (
                <path key={i} d={d} fill="none" stroke="#000" strokeWidth="1" shapeRendering="crispEdges" />
              ))}
              <path d="M653 216.5h4M1145 216.5h4" stroke="#fff" strokeWidth="2" />
            </Plot>
            <Trim viewBox="0 0 1413 70">
              <path d="M0 61C6 52 16 56 16 42V16H48C56 16 54 6 62 3" fill="none" stroke="#555" strokeWidth="1.2" />
              <path d="M1360 2C1368 6 1366 15 1380 15.5H1413" fill="none" stroke="#444" strokeWidth="1.2" />
            </Trim>
          </Canvas>
          <DocTabs>
            <DocTab $w={144} $pad={13}>
              <Ico name="home" size={16} />
              <DocText $ml={4}><LatinSmall>YTLWorld</LatinSmall>起始页</DocText>
              <DocClose $ml={6}><Ico name="closeDark" size={14} /></DocClose>
            </DocTab>
            <DocTab $w={128} $pad={6} $active>
              <Ico name="tabSpace" size={16} />
              <DocText $ml={6}>空间图形编辑</DocText>
              <DocClose $ml={8}><Ico name="closeDark" size={14} /></DocClose>
            </DocTab>
            <DocNav viewBox="0 0 44 10">
              <path d="M1 0v10M8 0L3 5l5 5zM18 0l-5 5 5 5zM26 0l5 5-5 5zM36 0l5 5-5 5zM43 0v10" fill="#888" stroke="#888" />
            </DocNav>
          </DocTabs>
        </Center>

        <Dock $w={45}>
          <Panel $h={201}>
            <PanelHeader title="布局" />
            <LegendTools short />
            <Tree>
              <RootRow />
              <Row $indent={33} $guide="full"><RedDot /><Expander /></Row>
              <Row $indent={33} $guide="end"><Expander /></Row>
            </Tree>
            <Scroll />
          </Panel>
          <TabRow $h={22}>
            <DockTab><Ico name="tabSpace" />空间</DockTab>
          </TabRow>
          <Panel $h={370} $mt={7}>
            <PanelHeader title="柱状图" />
            <LegendTools short />
            <Tree>
              <RootRow />
              <Row $indent={33} $guide="end"><RedDot /><Expander /></Row>
            </Tree>
            <Scroll />
          </Panel>
          <TabRow $h={21}>
            <DockTab $active><Ico name="tabBars" />柱状</DockTab>
          </TabRow>
          <Panel $h={199} $mt={8}>
            <PanelHeader title="查询表" />
            <LegendTools short />
            <Tree />
            <Scroll />
          </Panel>
          <TabRow>
            <DockTab><Ico name="tabAttr" />属性</DockTab>
          </TabRow>
        </Dock>
      </Main>

      <StatusBar>
        <StatusBold>选择图元：</StatusBold>
        <StatusText $ml={5}>鼠标操作&gt;&gt;</StatusText>
        <Radio $ml={7} $on />
        <StatusText $ml={4}>增加选择</StatusText>
        <Radio $ml={12} />
        <StatusText $ml={4}>剔除选择</StatusText>
        <StatusSep $ml={13} />
        <StatusLink $ml={8}>条件选择</StatusLink>
        <StatusSep $ml={10} />
        <StatusLink $ml={10}>属性显示</StatusLink>
        <StatusSep $ml={10} />
        <CheckBox $ml={13} />
        <StatusText $ml={4}>可选择只读图元</StatusText>
        <StatusSep $ml={12} />
        <StatusText $ml={8}>图形窗口中心(DMS)&gt;&gt;</StatusText>
        <StatusText $ml={10}>经度</StatusText>
        <Field $w={80} $ml={2}>1211039.5690</Field>
        <StatusText $ml={9}>纬度</StatusText>
        <Field $w={74} $ml={2}>255457.7623</Field>
        <StatusSep $ml={9} />
        <StatusText $ml={9}>显示比例尺</StatusText>
        <Field $w={64} $ml={3}>282.237</Field>
      </StatusBar>

      <Hint>
        <HintBold>当前选择：</HintBold>
        当前未选定图元，点击鼠标选择图元，如第一次点击未选中，则第二次点击开窗口选择，向左窗口为交叉选择，向右窗口为包含选择，如按下<HintLatin>SHIFT</HintLatin>键则为开窗口选择，按下<HintLatin>CTRL</HintLatin>键为循环单选
      </Hint>

      <Dropdown $x={332} $y={43} $w={179}>
        <ItemDrop text="显示字体图例数据窗口" />
        <ItemDrop text="编辑字体图例" />
        <ItemDrop text="拷贝字体图例" />
        <DropSep />
        <ItemDrop text="更改文本字体图例" />
        <DropSep />
        <ItemDrop icon="singleText" text="创建单行文本" />
        <ItemDrop icon="pageText" text="创建版面文本" />
        <ItemDrop text="创建位置文本" arrow active />
        <DropSep />
        <ItemDrop text="编辑位置文本线" arrow />
        <DropSep />
        <ItemDrop icon="binoc" text="查找文本" />
        <ItemDrop icon="replace" text="替换文本" />
        <DropSep />
        <ItemDrop icon="editText" text="编辑文本内容" />
        <ItemDrop icon="formatText" text="编辑统改文本格式" />
      </Dropdown>

      <Dropdown $x={509} $y={186} $w={195}>
        <DropItem $active>
          <DropIcon><Ico name="posText" /></DropIcon>
          <DropText $ml={6}>选择线条创建位置文本</DropText>
        </DropItem>
        {SUBMENU.map((t) => (
          <DropItem key={t}>
            <DropIcon />
            <DropText $ml={6}>{t}</DropText>
          </DropItem>
        ))}
      </Dropdown>
    </Shell>
  );
}
